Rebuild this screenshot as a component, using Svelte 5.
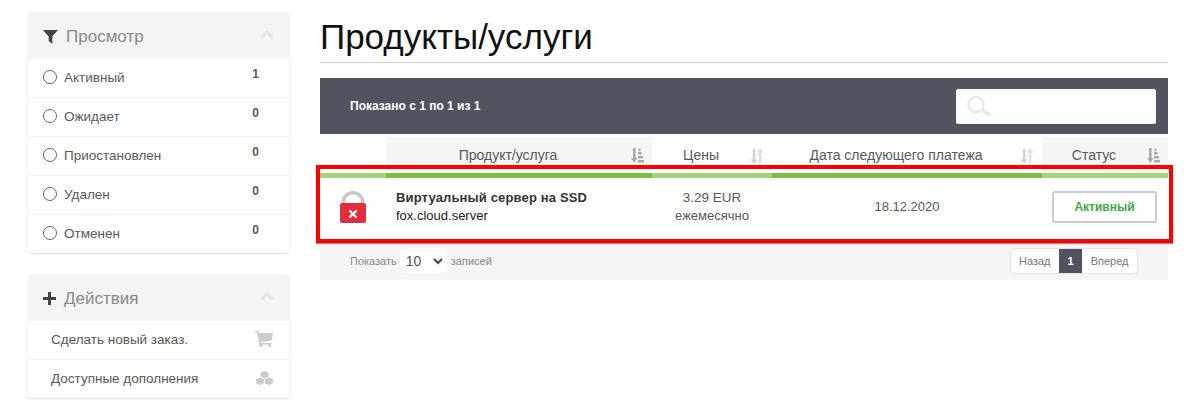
<script>
  const statuses = [
    { label: "Активный", count: 1 },
    { label: "Ожидает", count: 0 },
    { label: "Приостановлен", count: 0 },
    { label: "Удален", count: 0 },
    { label: "Отменен", count: 0 }
  ];
</script>

{#snippet chevron()}
  <svg class="chevron" width="14" height="9" viewBox="0 0 14 9"><path d="M1.500 7.500 7 2l5.500 5.500" fill="none" stroke="#e4e4e4" stroke-width="3"/></svg>
{/snippet}

{#snippet sortDesc()}
  <svg width="14" height="15" viewBox="0 0 14 15" fill="#aaa">
    <path d="M3 0h2.600v10H7.400L4.300 15 1.200 10H3z"/>
    <rect x="8.500" y="0.500" width="2" height="2.500"/>
    <rect x="8" y="4" width="3.500" height="2.500"/>
    <rect x="8" y="8" width="5" height="2.500"/>
    <rect x="8" y="12" width="6" height="2.500"/>
  </svg>
{/snippet}

{#snippet sortBoth()}
  <svg width="14" height="16" viewBox="0 0 14 16">
    <path d="M2.800 1h2.600v10.500h2L4.100 16 .8 11.500h2z" fill="#d2d2d2"/>
    <path d="M8.800 15V4.500h-2L10.100 0l3.300 4.500h-2V15z" fill="#e0e0e0"/>
  </svg>
{/snippet}

<div class="page">
  <aside class="sidebar">
    <section class="panel">
      <header class="panel-head">
        <svg class="head-icon" width="15" height="15" viewBox="0 0 15 15"><path d="M0 1h15L9.300 7.500V15L5.700 12V7.500z" fill="#444"/></svg>
        <h3>Просмотр</h3>
        {@render chevron()}
      </header>
      {#each statuses as s}
        <div class="row">
          <span class="radio"></span>
          <span class="row-label">{s.label}</span>
          <b class="count">{s.count}</b>
        </div>
      {/each}
    </section>

    <section class="panel">
      <header class="panel-head">
        <svg class="head-icon plus" width="13" height="13" viewBox="0 0 13 13"><path d="M5 0h3v5h5v3H8v5H5V8H0V5h5z" fill="#444"/></svg>
        <h3>Действия</h3>
        {@render chevron()}
      </header>
      <div class="row link">
        <span class="row-label">Сделать новый заказ.</span>
        <svg width="18" height="16" viewBox="0 0 18 16" fill="#ccc">
          <path d="M0 0h3.300l.6 2H18l-1.500 7.800L5.400 11l.3 1H16.500v1.500H4.300L2 1.500H0z"/>
          <circle cx="5.800" cy="14.400" r="1.600"/><circle cx="14.800" cy="14.400" r="1.600"/>
        </svg>
      </div>
      <div class="row link">
        <span class="row-label">Доступные дополнения</span>
        <svg class="cubes" width="17" height="14" viewBox="0 0 17 14" fill="#ccc">
          <path d="M8.500 0l4 1.500v4.200l-4 1.600-4-1.600V1.500z"/>
          <path d="M4 6.500l4 1.500v4.200L4 14 0 12.200V8z"/>
          <path d="M13 6.500L17 8v4.200L13 14l-4-1.800V8z"/>
        </svg>
      </div>
    </section>
  </aside>

  <main class="content">
    <h1>Продукты/услуги</h1>

    <div class="toolbar">
      <span class="info">Показано с 1 по 1 из 1</span>
      <div class="search">
        <svg width="24" height="20" viewBox="0 0 24 20" fill="none" stroke="#e8e8e8">
          <circle cx="9" cy="8.500" r="7.500" stroke-width="2.500"/>
          <path d="M15 14l7 4.500" stroke-width="3.500" stroke-linecap="round"/>
        </svg>
      </div>
    </div>

    <table>
      <thead>
        <tr>
          <th class="col-icon"></th>
          <th class="sorted"><span class="th-text">Продукт/услуга</span><span class="sort">{@render sortDesc()}</span></th>
          <th><span class="th-text">Цены</span><span class="sort">{@render sortBoth()}</span></th>
          <th><span class="th-text">Дата следующего платежа</span><span class="sort">{@render sortBoth()}</span></th>
          <th class="sorted"><span class="th-text">Статус</span><span class="sort">{@render sortDesc()}</span></th>
        </tr>
      </thead>
      <tbody>
        <tr>
          <td class="light">
            <svg class="lock" width="26" height="32" viewBox="0 0 26 32">
              <path d="M3.200 14v-2.500a9.800 9.800 0 0 1 19.600 0V14" fill="none" stroke="#c8c8c8" stroke-width="3.500"/>
              <rect y="12" width="26" height="20" rx="2" fill="#e0303f"/>
              <path d="M9.500 19.500l7 7M16.500 19.500l-7 7" stroke="#fff" stroke-width="2.200"/>
            </svg>
          </td>
          <td class="left">
            <div class="product">Виртуальный сервер на SSD</div>
            <div class="domain">fox.cloud.server</div>
          </td>
          <td class="light">
            <div class="price">3.29 EUR</div>
            <div class="cycle">ежемесячно</div>
          </td>
          <td><span class="date">18.12.2020</span></td>
          <td class="light"><span class="status">Активный</span></td>
        </tr>
      </tbody>
    </table>

    <div class="footer">
      <div class="length">
        <span>Показать</span>
        <span class="select">10
          <svg width="10" height="7" viewBox="0 0 10 7"><path d="M1 1l4 4 4-4" fill="none" stroke="#444" stroke-width="2"/></svg>
        </span>
        <span class="records">записей</span>
      </div>
      <div class="pager">
        <span class="page-btn">Назад</span>
        <span class="page-btn current">1</span>
        <span class="page-btn">Вперед</span>
      </div>
    </div>

    <div class="highlight"></div>
  </main>
</div>

<style>
  :global(body) {
    margin: 0;
    background: #fff;
    font-family: "Liberation Sans", Arial, sans-serif;
  }

  .page {
    display: flex;
    align-items: flex-start;
    gap: 31px;
    padding: 12px 25px 0 28px;
    height: 407px;
    overflow: hidden;
  }

  .sidebar {
    width: 261px;
    flex-shrink: 0;
    display: flex;
    flex-direction: column;
    gap: 21px;
  }

  .panel {
    border-radius: 4px;
    background: #fff;
    box-shadow: 0 1px 2px rgba(0, 0, 0, 0.15);
    overflow: hidden;
  }

  .panel-head {
    height: 47px;
    background: #f4f4f4;
    display: flex;
    align-items: center;
    padding: 0 15px;
    box-sizing: border-box;
  }

  .head-icon {
    flex-shrink: 0;
    margin-right: 8px;
    margin-top: 2px;
  }

  .panel-head h3 {
    margin: 2px 0 0;
    flex: 1;
    font-size: 17px;
    font-weight: 400;
    color: #8a8a8a;
  }

  .chevron {
    margin-bottom: 3px;
  }

  .row {
    height: 39px;
    display: flex;
    align-items: center;
    padding: 0 15px 2px;
    box-sizing: border-box;
    border-bottom: 1px solid #f1f1f1;
    font-size: 13.5px;
    color: #58595b;
  }

  .row:last-child {
    border-bottom: 0;
    height: 38px;
  }

  .radio {
    width: 12px;
    height: 12px;
    border: 1px solid #666;
    border-radius: 50%;
    margin-right: 7px;
  }

  .row-label {
    flex: 1;
  }

  .count {
    font-size: 12px;
    margin: 0 15px 6px 0;
  }

  .link {
    padding: 0 16px 2px 23px;
  }

  .content {
    flex: 1;
    position: relative;
    min-width: 0;
  }

  h1 {
    margin: 0;
    height: 50px;
    font-size: 35px;
    font-weight: 400;
    line-height: 50px;
    color: #111;
    border-bottom: 1px solid #ccc;
  }

  .toolbar {
    margin-top: 15px;
    height: 56px;
    background: #50545f;
    display: flex;
    align-items: center;
    justify-content: space-between;
    padding: 0 12px 0 30px;
  }

  .info {
    color: #fff;
    font-size: 12px;
    font-weight: 700;
    margin-bottom: 1px;
  }

  .search {
    width: 200px;
    height: 35px;
    background: #fff;
    border-radius: 2px;
    display: flex;
    align-items: center;
    padding-left: 11px;
    box-sizing: border-box;
  }

  table {
    width: 848px;
    border-collapse: collapse;
    table-layout: fixed;
    margin-top: 3px;
  }

  th {
    height: 38.500px;
    padding: 0 22px 0 0;
    font-size: 14px;
    font-weight: 400;
    color: #58595b;
    position: relative;
    text-align: center;
    box-sizing: border-box;
  }

  th.sorted {
    background: #f5f5f5;
  }

  th:nth-child(1) { width: 66px; }
  th:nth-child(2) { width: 266px; }
  th:nth-child(3) { width: 120px; }
  th:nth-child(4) { width: 270px; }

  .sort {
    position: absolute;
    right: 8px;
    top: 11px;
  }

  td {
    height: 57px;
    padding: 0 0 7px;
    text-align: center;
    font-size: 13px;
    color: #58595b;
    border-top: 5px solid #77bf43;
  }

  td.light {
    border-top-color: #a3d37b;
  }

  td.left {
    text-align: left;
    padding-left: 10px;
  }

  .lock {
    display: block;
    margin: 0 auto 0 20px;
  }

  .product {
    font-weight: 700;
    color: #333;
    letter-spacing: 0.15px;
    font-size: 13px;
  }

  .domain {
    color: #222;
    font-size: 13px;
    margin-top: 3px;
  }

  .price {
    font-size: 13.500px;
  }

  .cycle {
    font-size: 13px;
    margin-top: 3px;
  }

  .status {
    display: block;
    width: 101px;
    margin: 0 0 0 10px;
    height: 28px;
    line-height: 28px;
    border: 2px solid #ccc;
    border-radius: 3px;
    font-size: 12px;
    font-weight: 700;
    color: #3ea84a;
  }

  .footer {
    height: 38px;
    background: #f5f5f5;
    display: flex;
    align-items: center;
    justify-content: space-between;
    padding: 0 30px;
    font-size: 11px;
    color: #888;
  }

  .length {
    display: flex;
    align-items: center;
    gap: 3px;
  }

  .records {
    margin-left: 1px;
  }

  .select {
    width: 47px;
    height: 24px;
    background: #fff;
    border-radius: 3px;
    box-sizing: border-box;
    padding: 0 4px 0 6px;
    display: flex;
    align-items: center;
    justify-content: space-between;
    font-size: 14px;
    color: #555;
  }

  .pager {
    display: flex;
    border: 1px solid #e5e5e5;
    border-radius: 4px;
    background: #fff;
    height: 24px;
    overflow: hidden;
  }

  .page-btn {
    padding: 0 8.500px;
    line-height: 24px;
    color: #777;
  }

  .page-btn.current {
    background: #50545f;
    color: #fff;
    font-weight: 700;
  }

  .highlight {
    position: absolute;
    left: -4px;
    right: -5px;
    top: 153px;
    height: 70px;
    border: 4px solid #f00;
    box-shadow: 0 1px 1px rgba(0, 0, 0, 0.4);
    pointer-events: none;
  }
</style>
